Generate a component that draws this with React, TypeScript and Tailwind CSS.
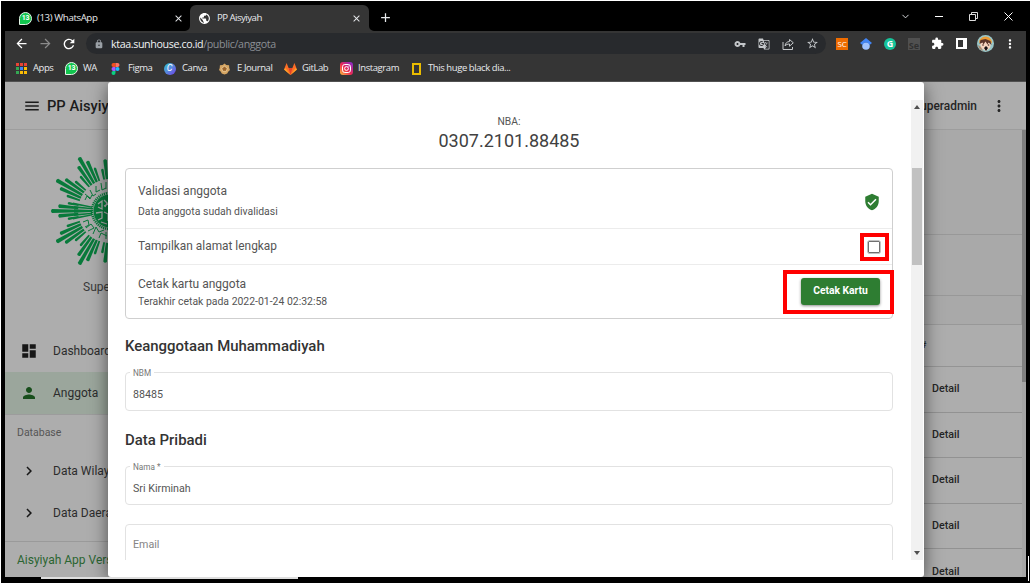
import React from "react";
import { MdDashboard, MdPerson, MdChevronRight, MdMenu, MdMoreVert, MdVerifiedUser, MdExtension, MdVpnKey, MdGTranslate, MdLock, MdArrowBack, MdArrowForward, MdRefresh, MdAdd, MdClose, MdStarBorder, MdPublic } from "react-icons/md";
import { ChevronDown } from "lucide-react";

const appDots = ["#ea4335", "#ea4335", "#ea4335", "#34a853", "#4285f4", "#fbbc05", "#34a853", "#fbbc05", "#fbbc05"];

function Badge() {
  return (
    <span className="relative flex h-[13px] w-[13px] items-center justify-center rounded-full rounded-bl-[3px] border border-[#e4f5e8] bg-[#12c64f] font-['Roboto',sans-serif] text-[7px] font-bold leading-none tracking-[-0.3px] text-white">
      13
    </span>
  );
}

function Bookmark({ icon, label, width }: { icon: React.ReactNode; label: string; width: string }) {
  return (
    <div className={`flex shrink-0 items-center ${width}`}>
      <span className="flex w-[18px] shrink-0 items-center">{icon}</span>
      <span className="whitespace-nowrap">{label}</span>
    </div>
  );
}

function Figma() {
  return (
    <svg width="9" height="12" viewBox="0 0 8 12">
      <path d="M2 0h2v4H2a2 2 0 010-4" fill="#f24e1e" />
      <path d="M4 0h2a2 2 0 010 4H4z" fill="#ff7262" />
      <path d="M2 4h2v4H2a2 2 0 010-4" fill="#a259ff" />
      <circle cx="6" cy="6" r="2" fill="#1abcfe" />
      <path d="M2 8h2v2a2 2 0 11-2-2" fill="#0acf83" />
    </svg>
  );
}

function Gitlab() {
  return (
    <svg width="13" height="12" viewBox="0 0 13 12">
      <path d="M2.600 0L0 6.500l6.500 5.500L13 6.500 10.400 0l-2 5H4.600z" fill="#fc6d26" />
      <path d="M4.600 5h3.800L6.500 12z" fill="#e24329" />
      <path d="M0 6.500l1.500-1.500L6.500 12zM13 6.500L11.500 5 6.500 12z" fill="#fca326" />
    </svg>
  );
}

function Instagram() {
  return (
    <svg width="13" height="13" viewBox="0 0 13 13">
      <defs>
        <linearGradient id="insta" x1="0" y1="1" x2="1" y2="0">
          <stop offset="0" stopColor="#fdc03b" />
          <stop offset=".45" stopColor="#ee2a50" />
          <stop offset="1" stopColor="#7a2bd8" />
        </linearGradient>
      </defs>
      <rect width="13" height="13" rx="3" fill="url(#insta)" />
      <rect x="2.500" y="2.500" width="8" height="8" rx="2.300" fill="none" stroke="#fff" />
      <circle cx="6.500" cy="6.500" r="1.900" fill="none" stroke="#fff" />
      <circle cx="8.900" cy="4.100" r=".6" fill="#fff" />
    </svg>
  );
}

function TabStrip() {
  return (
    <div className="flex h-[30px] shrink-0 items-end bg-black text-[9.700px] tracking-[-0.4px] text-[#e8eaed]">
      <div className="flex h-[26px] w-[185px] shrink-0 items-center pl-[14px]">
        <Badge />
        <span className="ml-[5px] flex-1">(13) WhatsApp</span>
        <MdClose className="mr-[6px]" size={11} />
      </div>
      <div className="relative flex h-[26px] w-[179px] shrink-0 items-center rounded-t-[6px] bg-[#353535] pl-[8px]">
        <svg className="absolute -left-[5px] bottom-0" width="5" height="5"><path d="M5 0v5H0A5 5 0 005 0" fill="#353535" /></svg>
        <svg className="absolute -right-[5px] bottom-0" width="5" height="5"><path d="M0 0v5h5A5 5 0 010 0" fill="#353535" /></svg>
        <MdPublic size={13} className="text-white" />
        <span className="ml-[6px] flex-1 tracking-[-0.55px]">PP Aisyiyah</span>
        <MdClose className="mr-[7px]" size={11} />
      </div>
      <MdAdd className="mb-[6px] ml-[9px]" size={15} />
      <div className="mb-[2px] ml-auto flex h-[26px] items-center">
        <ChevronDown className="mr-[24px]" size={11} strokeWidth={2} />
        <svg className="mr-[26px]" width="8" height="8"><path d="M0 4.500h8" stroke="#fff" /></svg>
        <svg className="mr-[26px]" width="9" height="9" fill="none" stroke="#ddd"><path d="M.5 2.500h6v6h-6zM2.500 2V.5h6v6H7" /></svg>
        <svg className="mr-[13px]" width="9" height="9" stroke="#fff"><path d="M.5.5l8 8M8.500.5l-8 8" /></svg>
      </div>
    </div>
  );
}

function Toolbar() {
  return (
    <div className="flex h-[25px] shrink-0 items-center bg-[#353535] text-white">
      <MdArrowBack className="ml-[9px]" size={15} />
      <MdArrowForward className="ml-[9px] text-[#8b8b8b]" size={15} />
      <MdRefresh className="ml-[8px] mr-[9px]" size={16} />
      <div className="flex h-[21px] w-[740px] shrink-0 items-center rounded-full bg-[#282a2d] pl-[8px] text-[#c4c7ca]">
        <MdLock size={10} className="text-[#9aa0a6]" />
        <span className="ml-[7px] flex-1 pt-[1px] text-[10.700px] tracking-[-0.38px] text-[#8b8f94]">
          <span className="text-[#f1f3f4]">ktaa.sunhouse.co.id</span>/public/anggota
        </span>
        <MdVpnKey size={12} className="mr-[12px]" />
        <MdGTranslate size={12} className="mr-[12px]" />
        <svg className="mr-[12px]" width="12" height="12" viewBox="0 0 12 12" fill="none" stroke="currentColor"><path d="M1 4v7.500h9.500V9M3 8c.4-3 2-4.300 4.500-4.500v-2l3.800 3.300-3.800 3.400V6C5.500 6 4.200 6.600 3 8z" /></svg>
        <MdStarBorder size={13} className="mr-[7px]" />
      </div>
      <div className="ml-[10px] flex flex-1 items-center">
        <span className="flex h-[12px] w-[12px] items-center justify-center bg-[#ef6c00] text-[8px] tracking-[-0.3px] text-white">SC</span>
        <svg className="ml-[12px]" width="12" height="12" viewBox="0 0 12 12"><circle cx="6" cy="8" r="3.800" fill="#a0c3ff" /><path d="M6 0L0 5l2.500 2C3 3.500 9 3.500 9.500 7L12 5z" fill="#4285f4" /></svg>
        <span className="ml-[12px] flex h-[12px] w-[12px] items-center justify-center rounded-full bg-[#15c39a] text-[9px] font-bold text-white">G</span>
        <span className="ml-[12px] flex h-[12px] w-[12px] items-end justify-center bg-[#505050] text-[9px] font-bold leading-[8px] text-[#303030]">Se</span>
        <MdExtension className="ml-[11px]" size={13} />
        <svg className="ml-[12px]" width="11" height="11"><path d="M1 1h9v9H1z" fill="none" stroke="#fff" strokeWidth="2" /><path d="M7 1h4v9H7z" fill="#fff" /></svg>
        <svg className="ml-[10px]" width="17" height="17" viewBox="0 0 17 17">
          <circle cx="8.500" cy="8.500" r="8.500" fill="#9ac7c8" />
          <path d="M2 8Q2 2 9 1.500q6 1 6 7L13 7H4z" fill="#ed9c35" />
          <path d="M3 8q5-6 11 0l-1 5-4 3-5-3z" fill="#f5d3c0" />
          <path d="M2.500 9l1-4 5-1 5 2 1 4-3-2.500-1 2-2-3-2 3-1-2z" fill="#5b352b" />
          <path d="M9 11l2 2-2 3-2-3z" fill="#171216" />
          <circle cx="6" cy="10" r=".8" fill="#402821" /><circle cx="11.500" cy="10" r=".8" fill="#402821" />
          <path d="M1 10q1 5 5 6l-2-4z" fill="#b08b71" />
        </svg>
        <MdMoreVert className="ml-[9px]" size={14} />
      </div>
    </div>
  );
}

function Bookmarks() {
  return (
    <div className="flex h-[26px] shrink-0 items-center border-b border-[#515151] bg-[#353535] pl-[10px] text-[9.500px] tracking-[-0.42px] text-[#e8eaed]">
      <Bookmark width="w-[50px]" label="Apps" icon={<span className="ml-[1px] grid grid-cols-3 gap-[1.500px]">{appDots.map((c, i) => <span key={i} className="h-[2.500px] w-[2.500px]" style={{ background: c }} />)}</span>} />
      <Bookmark width="w-[45px]" label="WA" icon={<Badge />} />
      <Bookmark width="w-[54px]" label="Figma" icon={<span className="ml-[1px]"><Figma /></span>} />
      <Bookmark width="w-[55px]" label="Canva" icon={<span className="flex h-[12px] w-[12px] items-center justify-center rounded-full bg-linear-to-br from-[#00c4cc] to-[#6b32e8] pr-[1px] font-['Roboto',sans-serif] text-[9px] italic text-white">C</span>} />
      <Bookmark width="w-[65px]" label="E Journal" icon={<svg width="11" height="12" viewBox="0 0 12 12"><path d="M6 0l2 1.500 3 .5.2 3L12 7l-2 2-1 2-3 1-3-1-1-2-2-2 .8-2L1 2l3-.5z" fill="#d6a663" /><path d="M6 3l3 2-1 3.500H4L3 5z" fill="#9c642c" stroke="#f9dfb3" strokeWidth=".7" /></svg>} />
      <Bookmark width="w-[56px]" label="GitLab" icon={<Gitlab />} />
      <Bookmark width="w-[70px]" label="Instagram" icon={<Instagram />} />
      <Bookmark width="w-[110px]" label="This huge black dia..." icon={<span className="ml-[2px] h-[12px] w-[9px] border-2 border-[#eabc00]" />} />
    </div>
  );
}

const bundles = Array.from({ length: 12 }, (_, i) => ({ angle: i * 30, reach: i % 3 === 0 ? 0 : 3 }));
const rays = [
  { turn: 0, tip: 60, half: 2 },
  { turn: -5.5, tip: 53, half: 1.8 },
  { turn: 5.5, tip: 53, half: 1.8 },
  { turn: -10.5, tip: 44, half: 1.3 },
  { turn: 10.5, tip: 44, half: 1.3 },
];

function Emblem() {
  return (
    <svg width="120" height="120" viewBox="-60 -60 120 120" className="shrink-0 overflow-visible">
      <g fill="#087a3b">
        {bundles.map(({ angle, reach }) => (
          <g key={angle} transform={`rotate(${angle})`}>
            {rays.map((r) => {
              const tip = r.tip + reach;
              return <path key={r.turn} transform={`rotate(${r.turn})`} d={`M-30 -${r.half * 0.6}L-${tip - 2} -${r.half}Q-${tip} 0 -${tip - 2} ${r.half}L-30 ${r.half * 0.6}z`} />;
            })}
          </g>
        ))}
      </g>
      <circle r="32" fill="#a9a9a9" />
      <path d="M-36-1.800L-18-1v2l-18 .8zM-36-5l18 2v1.200l-18-1.200zM-36 5l18-2V1.800L-36 3zM-37-8.500l19 4v1.200l-19-3.200zM-37 8.500l19-4V3.300l-19 3.200z" fill="#087a3b" />
      <circle r="16.500" fill="#087a3b" />
      <circle r="18" fill="none" stroke="#087a3b" strokeWidth="2.500" strokeDasharray="1.200 .8" />
      <g fill="none" stroke="#087a3b" strokeWidth="1">
        <path d="M-25-11l2-4 3 3 2-4M-25-17l5 4M-20-21l3 6 3-2M-14-25v6l4-2M-9-28l1 7 4-2M-4-29v7" />
        <path d="M-27 11l5-2 1 5-4 2M-24 17l5-4 3 4-6 3M-17 23l3-7 3 5 5-2M-11 27l2-5 6 3M-4 28v-7" />
      </g>
      <g fill="none" stroke="#a9a9a9" strokeWidth="1.300">
        <path d="M-12-7l4-3v8l-4-2M-6-11l3 3-2 4M-14 2l6-1v6l-4 2M-6 1l4 2v7M-6-5l6-3M-9 11l6 2" />
      </g>
    </svg>
  );
}

function NavRow({ icon, label, active = false }: { icon: React.ReactNode; label: string; active?: boolean }) {
  return (
    <div className={`flex h-[42px] shrink-0 items-center whitespace-nowrap pl-[15px] text-[12px] text-[#2c2c2c] ${active ? "bg-[#9ba69c]" : ""}`}>
      <span className="w-[33px] shrink-0 text-[#171717]">{icon}</span>
      {label}
    </div>
  );
}

function Sidebar() {
  return (
    <div className="flex w-[103px] shrink-0 flex-col overflow-hidden bg-[#adadad]">
      <div className="flex h-[48px] shrink-0 items-center whitespace-nowrap border-b border-[#9d9d9d] pl-[18px] pt-[1px] text-[14.700px] font-medium text-[#1c1c1c]">
        <MdMenu size={18} className="mr-[6px] shrink-0" />PP Aisyiyah
      </div>
      <div className="flex h-[200px] shrink-0 flex-col pl-[45px] pt-[21px]">
        <Emblem />
        <span className="mt-[7px] whitespace-nowrap pl-[33px] text-[12px] text-[#393939]">Superadmin</span>
      </div>
      <NavRow icon={<MdDashboard size={18} />} label="Dashboard" />
      <NavRow active icon={<MdPerson size={18} className="text-[#174e1b]" />} label="Anggota" />
      <div className="flex h-[36px] shrink-0 items-center border-t border-[#9c9c9c] pl-[12px] text-[10.500px] text-[#555]">Database</div>
      <NavRow icon={<MdChevronRight size={18} />} label="Data Wilayah" />
      <NavRow icon={<MdChevronRight size={18} />} label="Data Daerah" />
      <div className="mt-[7px] flex h-[36px] shrink-0 items-center whitespace-nowrap border-t border-[#9a9a9a] pl-[12px] text-[12px] text-[#2b6531]">Aisyiyah App Version</div>
    </div>
  );
}

function Field({ label, value }: { label: string; value: string }) {
  return (
    <fieldset className="h-[44px] min-w-0 shrink-0 rounded-[4px] border border-[#e2e2e2] pl-[7px] text-[10.700px] text-[#555]">
      <legend className="-ml-[3px] h-[11px] px-[3px] text-[8.200px] leading-[13px] text-[#777]">{label}</legend>
      <div className="pt-[8px] leading-[18px]">{value}</div>
    </fieldset>
  );
}

function Modal() {
  return (
    <div className="relative z-10 flex w-[816px] shrink-0 rounded-[3px] bg-white shadow-[0_4px_18px_rgba(0,0,0,0.55)]">
      <div className="ml-[17px] flex h-[478px] w-[769px] shrink-0 flex-col overflow-hidden pr-[1px] text-[#555]">
        <div className="flex h-[86px] shrink-0 flex-col items-center pt-[32px]">
          <span className="text-[10.300px] leading-[15px]">NBA:</span>
          <span className="text-[18px] leading-[24px] text-[#414141]">0307.2101.88485</span>
        </div>
        <div className="flex h-[151px] shrink-0 flex-col rounded-[4px] border border-[#cfcfcf] text-[12px]">
          <div className="flex h-[60px] items-center border-b border-[#ececec] pl-[12px] pr-[11px]">
            <div className="flex flex-1 flex-col pt-[5px]"><span className="leading-[20px]">Validasi anggota</span><span className="text-[10.450px] leading-[21px]">Data anggota sudah divalidasi</span></div>
            <MdVerifiedUser size={18} className="mt-[7px] text-[#2e7d32]" />
          </div>
          <div className="flex h-[36px] items-center border-b border-[#ececec] pl-[12px]">
            <span className="flex-1 text-[11.900px]">Tampilkan alamat lengkap</span>
            <span className="mr-[3px] flex h-[28px] w-[29px] items-center justify-center border-4 border-[#ff0000] pr-[1px]"><span className="h-[12px] w-[12px] rounded-[1px] border-[1.500px] border-[#707070] shadow-[0_0_0_.5px_#888]" /></span>
          </div>
          <div className="flex flex-1 items-center pl-[12px]">
            <div className="flex flex-1 flex-col pt-[4px]"><span className="leading-[17px]">Cetak kartu anggota</span><span className="text-[10.450px] leading-[18px]">Terakhir cetak pada 2022-01-24 02:32:58</span></div>
            <div className="-mr-[2px] flex h-[44px] w-[111px] items-center border-4 border-[#ff0000] pl-[14px]">
              <button className="-mt-[1px] h-[27px] w-[79px] whitespace-nowrap rounded-[3px] bg-[#2e7d32] pb-[1px] text-[10.300px] font-bold text-white shadow-[0_1px_3px_rgba(0,0,0,0.45)]">Cetak Kartu</button>
            </div>
          </div>
        </div>
        <h2 className="mt-[17px] shrink-0 text-[14.950px] font-medium leading-[20px] text-[#333]">Keanggotaan Muhammadiyah</h2>
        <div className="mt-[11px] flex shrink-0 flex-col"><Field label="NBM" value="88485" /></div>
        <h2 className="mt-[19px] shrink-0 text-[14.950px] font-medium leading-[20px] text-[#333]">Data Pribadi</h2>
        <div className="mt-[11px] flex shrink-0 flex-col"><Field label="Nama *" value="Sri Kirminah" /></div>
        <div className="mt-[19px] flex h-[40px] shrink-0 items-center rounded-[4px] border border-[#e2e2e2] pl-[7px] pt-[2px] text-[10.700px] text-[#858585]">Email</div>
      </div>
      <div className="ml-auto mr-[1px] mt-[18px] flex h-[460px] w-[12px] flex-col items-center bg-[#f1f1f1]">
        <svg className="mt-[5px]" width="6" height="4"><path d="M0 4l3-4 3 4" fill="#505050" /></svg>
        <div className="mt-[59px] h-[97px] w-[10px] bg-[#c1c1c1]" />
        <svg className="mb-[5px] mt-auto" width="6" height="4"><path d="M0 0l3 4 3-4" fill="#505050" /></svg>
      </div>
    </div>
  );
}

function RightPanel() {
  return (
    <div className="flex flex-1 flex-col overflow-hidden bg-[#adadad] text-[#252525]">
      <div className="flex h-[48px] shrink-0 items-center border-b border-[#9d9d9d] pt-[1px] text-[11.900px] font-medium">
        <span className="-ml-[11px] w-[79px] whitespace-nowrap pt-[1px]">Superadmin</span>
        <MdMoreVert size={18} className="-ml-[2px]" />
      </div>
      <div className="flex min-h-0 flex-1">
        <div className="flex flex-1 flex-col bg-[#a9a9a9] text-[10.700px] font-medium">
          <div className="h-[105px] shrink-0 border-b border-[#989898]" />
          <div className="h-[61px] shrink-0 border-b border-[#989898]" />
          <div className="h-[29px] shrink-0 border-b border-r border-[#989898]" />
          <div className="flex h-[42px] shrink-0 items-center border-b border-[#949494] bg-[#adadad] text-[9px]"><span className="-ml-[3px]">#</span></div>
          {[0, 1, 2, 3, 4].map((i) => <div key={i} className="flex h-[45.600px] shrink-0 items-center border-b border-[#929292] bg-[#adadad] pl-[8px]">Detail</div>)}
        </div>
        <div className="w-[4px] bg-[#a6a6a6]"><div className="h-[252px] bg-[#808080]" /></div>
      </div>
    </div>
  );
}

export default function App() {
  return (
    <div className="relative h-[585px] w-[1031px] overflow-hidden bg-white pl-[1px] pt-[1px] font-['Roboto',sans-serif]">
      <div className="flex h-[582px] w-[1029px] flex-col bg-black pl-[4px] pr-[4px]">
        <div className="flex flex-col font-['Open_Sans',sans-serif]">
          <TabStrip /><Toolbar /><Bookmarks />
        </div>
        <div className="flex h-[495px] shrink-0 overflow-hidden bg-[#adadad]">
          <Sidebar /><Modal /><RightPanel />
        </div>
        <div className="ml-[36px] h-[2px] w-[257px] shrink-0 bg-[#dedede]" />
      </div>
      <div className="absolute left-[1028px] top-[556px] h-[25px] w-[1px] bg-white" />
    </div>
  );
}
